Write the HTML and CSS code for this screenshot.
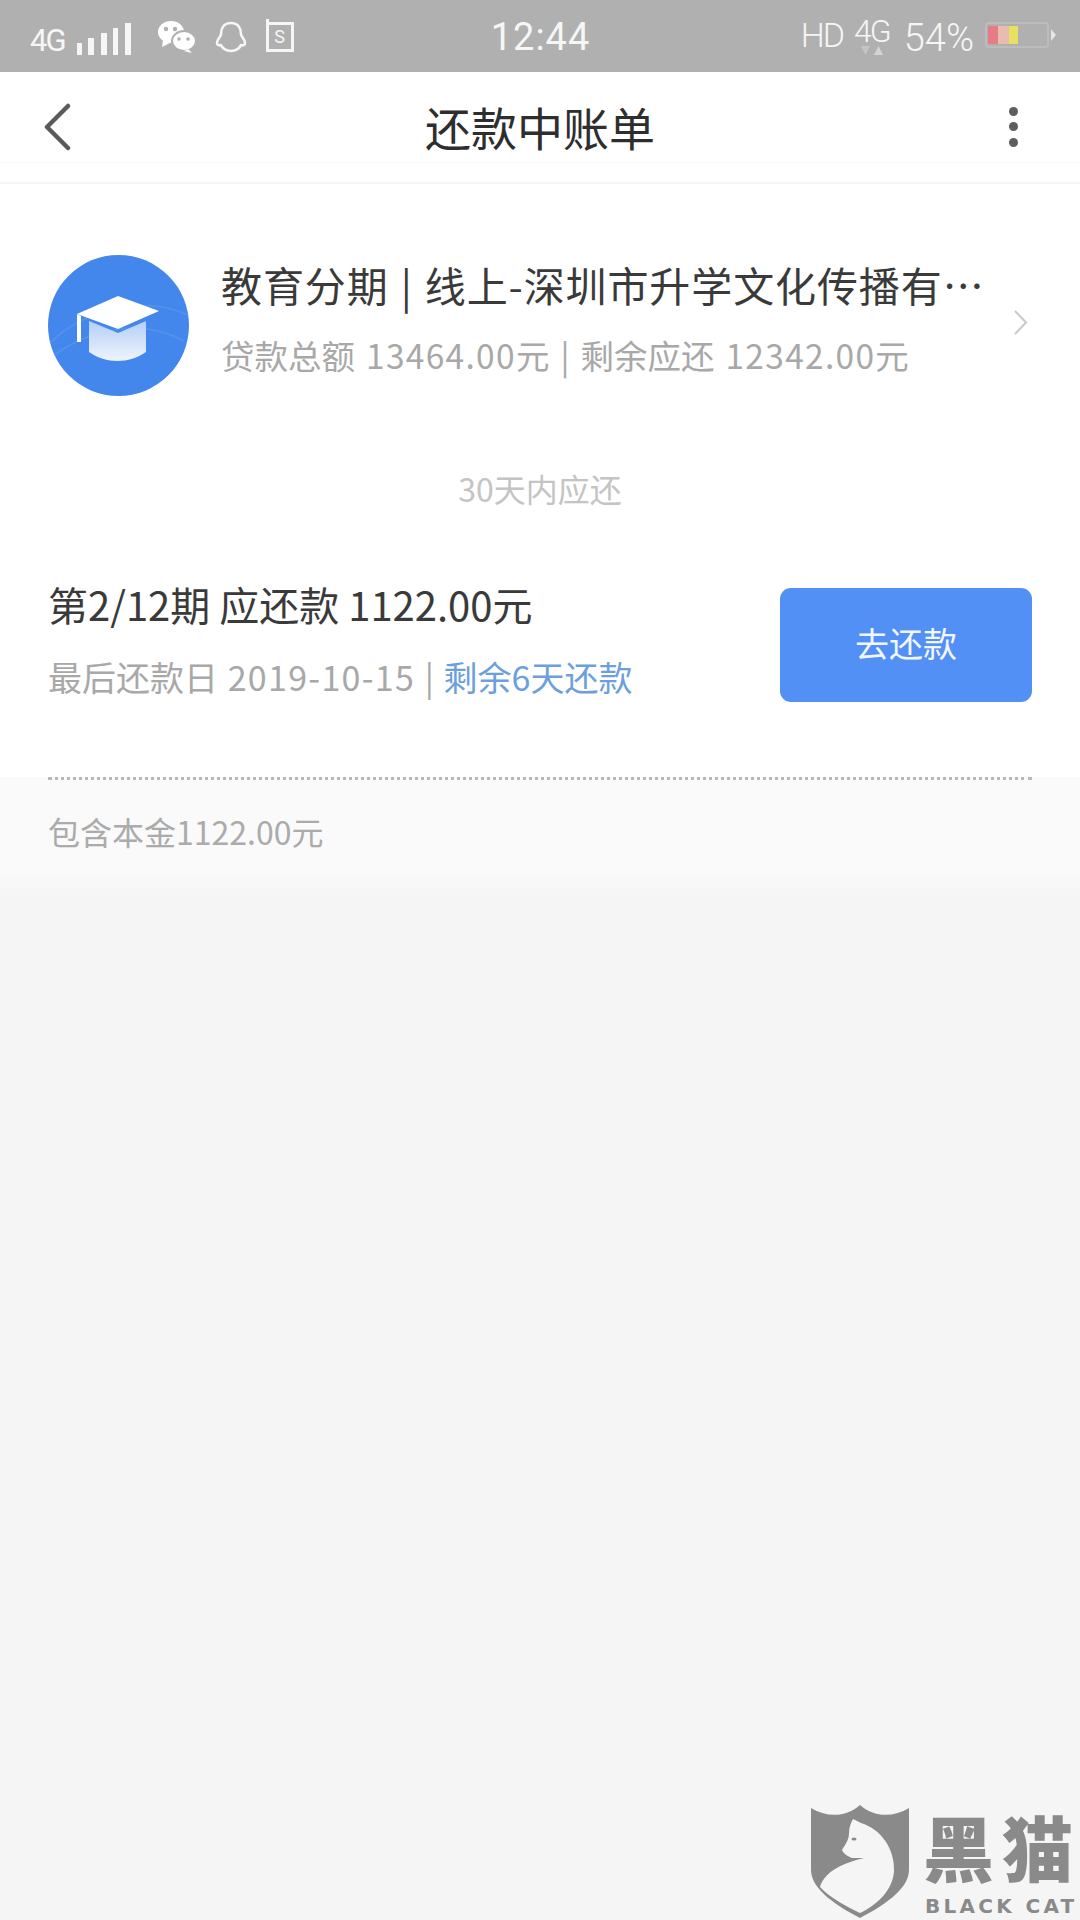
FILE: index.html
```html
<!DOCTYPE html>
<html lang="zh-CN">
<head>
	<meta charset="UTF-8">
	<meta name="viewport" content="width=device-width, initial-scale=1.0">
	<title>还款中账单</title>
	<link rel="stylesheet" href="styles.css">
</head>
<body>
	<div class="status">
		<div class="status-left">
			<span class="net">4G</span>
			<svg class="signal" width="54" height="32" viewBox="0 0 54 32">
				<rect x="0" y="20" width="5" height="12"/>
				<rect x="11" y="15" width="6" height="17"/>
				<rect x="24" y="10" width="6" height="22"/>
				<rect x="36" y="5" width="5" height="27"/>
				<rect x="48" y="0" width="6" height="32"/>
			</svg>
			<svg class="wechat" width="38" height="32" viewBox="0 0 38 32">
				<ellipse cx="13" cy="11" rx="13" ry="11" fill="#fff"/>
				<path d="M5 19l-1 7 8-4z" fill="#fff"/>
				<ellipse cx="26" cy="20" rx="12" ry="10" fill="#fff" stroke="#b0b0b0" stroke-width="2"/>
				<path d="M30 28l4 4-8-2z" fill="#fff"/>
				<circle cx="8" cy="8" r="2.200" fill="#b0b0b0"/>
				<circle cx="17" cy="8" r="2.200" fill="#b0b0b0"/>
				<circle cx="21" cy="18" r="1.800" fill="#b0b0b0"/>
				<circle cx="30" cy="18" r="1.800" fill="#b0b0b0"/>
			</svg>
			<svg class="qq" width="32" height="32" viewBox="0 0 32 32">
				<path d="M16 2C9 2 6 7 6 13c0 3-4 5-4 9 0 2 2 3 4 2 1 3 5 6 10 6s9-3 10-6c2 1 4 0 4-2 0-4-4-6-4-9 0-6-3-11-10-11z" fill="none" stroke="#f6f6f6" stroke-width="2.600" stroke-linejoin="round"/>
			</svg>
			<div class="note">
				<span class="note-s">S</span>
			</div>
		</div>
		<div class="clock">12:44</div>
		<div class="status-right">
			<span class="hd">HD</span>
			<div class="net-up">
				<span class="net-small">4G</span>
				<svg width="22" height="11" viewBox="0 0 22 11">
					<path d="M0 1h9l-4.500 9z" fill="#c4c4c4"/>
					<path d="M13 10h9l-4.500-9z" fill="#d4d4d4"/>
				</svg>
			</div>
			<span class="percent">54%</span>
			<div class="battery">
				<div class="battery-body">
					<i class="cell cell-red"></i>
					<i class="cell cell-pink"></i>
					<i class="cell cell-yellow"></i>
				</div>
				<i class="battery-tip"></i>
			</div>
		</div>
	</div>

	<header class="nav">
		<svg class="back" width="28" height="48" viewBox="0 0 28 48">
			<path d="M25 3L4 24l21 21" fill="none" stroke="#5a5a5a" stroke-width="4.500" stroke-linecap="round" stroke-linejoin="round"/>
		</svg>
		<h1 class="nav-title">还款中账单</h1>
		<div class="more"><i></i><i></i><i></i></div>
	</header>
	<div class="nav-gap"></div>

	<section class="loan">
		<svg class="loan-icon" width="141" height="141" viewBox="0 0 141 141">
			<defs>
				<linearGradient id="capBody" x1="0" y1="0" x2="0" y2="1">
					<stop offset="0" stop-color="#b4cff6"/>
					<stop offset="1" stop-color="#eef4fd"/>
				</linearGradient>
			</defs>
			<circle cx="70.500" cy="70.500" r="70.500" fill="#4487ec"/>
			<path d="M2 88c30-30 90-50 138-28M6 100c40-28 90-36 130-14" fill="none" stroke="#5f99ef" stroke-width="2" opacity="0.5"/>
			<path d="M41 66l29 12 28-12v31c-17 12-40 12-57 0z" fill="url(#capBody)"/>
			<path d="M70 41l41 15-41 18-41-15z" fill="#fff"/>
			<path d="M29 59v28h4V61z" fill="#fff"/>
		</svg>
		<div class="loan-text">
			<div class="loan-title">教育分期 | 线上-深圳市升学文化传播有…</div>
			<div class="loan-sub">贷款总额 <span class="amount">13464.00</span>元 | 剩余应还 <span class="amount">12342.00</span>元</div>
		</div>
		<svg class="loan-arrow" width="15" height="27" viewBox="0 0 15 27">
			<path d="M2 2l11 11.500L2 25" fill="none" stroke="#c9c9c9" stroke-width="2"/>
		</svg>
	</section>

	<div class="due-label">30天内应还</div>

	<section class="bill">
		<div class="bill-text">
			<div class="bill-title">第2/12期 应还款 1122.00元</div>
			<div class="bill-sub">最后还款日 <span class="bill-date">2019-10-15</span> | <span class="bill-left">剩余6天还款</span></div>
		</div>
		<button class="pay">去还款</button>
	</section>

	<section class="detail">
		<p class="detail-text">包含本金1122.00元</p>
	</section>

	<div class="mark">
		<svg class="mark-shield" width="98" height="114" viewBox="0 0 98 114">
			<path d="M0 3c16 10 36 9 49-3 13 12 33 13 49 3v62c0 20-28 37-49 48C28 102 0 85 0 65z" fill="#8a8a8a"/>
			<path d="M42 14l8 4c20 6 34 26 33 48-1 19-17 34-34 42-13-6-31-16-40-26 5-16 23-24 44-29H41c-5-2-9-5-10-8 3-5 7-10 7-17 0-6 2-10 4-14z" fill="#f5f5f5"/>
			<ellipse cx="43" cy="34" rx="2.500" ry="1.500" fill="#8a8a8a"/>
		</svg>
		<div class="mark-text">
			<div class="mark-cn">黑猫</div>
			<div class="mark-en">BLACK CAT</div>
		</div>
	</div>
</body>
</html>
```

FILE: styles.css
```css
* {
	box-sizing: border-box;
}
html, body {
	margin: 0;
	padding: 0;
}
body {
	position: relative;
	width: 1080px;
	height: 1920px;
	overflow: hidden;
	font-family: "Noto Sans CJK SC", "Noto Sans", sans-serif;
	background-color: #f5f5f5;
	color: #333;
}

/* status bar */
.status {
	display: flex;
	align-items: center;
	justify-content: space-between;
	height: 72px;
	padding: 0 24px 0 30px;
	background-color: #b0b0b0;
	color: #f6f6f6;
	font-family: Roboto, "Noto Sans", sans-serif;
}
.status-left,
.status-right {
	display: flex;
	align-items: center;
	width: 320px;
}
.status-right {
	justify-content: flex-end;
}
.net {
	margin-top: 9px;
	font-size: 31px;
	letter-spacing: -2px;
}
.signal {
	margin: 6px 0 0 12px;
	fill: #f6f6f6;
}
.wechat {
	margin: 1px 0 0 27px;
}
.qq {
	margin: 1px 0 0 19px;
}
.note {
	position: relative;
	display: flex;
	align-items: center;
	justify-content: center;
	width: 28px;
	height: 30px;
	margin: 2px 0 0 19px;
	border: 3px solid #f6f6f6;
}
.note::before {
	content: "";
	position: absolute;
	left: -3px;
	top: -6px;
	width: 3px;
	height: 5px;
	background-color: #f6f6f6;
}
.note-s {
	font-size: 18px;
	line-height: 1;
}
.clock {
	font-size: 38px;
	letter-spacing: 1px;
	margin: 1px 0 0 -5px;
}
.hd {
	font-size: 34px;
	font-weight: 300;
	letter-spacing: -2px;
	margin-top: -2px;
}
.net-up {
	display: flex;
	flex-direction: column;
	align-items: center;
	margin: 2px 0 0 11px;
}
.net-small {
	font-size: 32px;
	font-weight: 300;
	line-height: 27px;
	letter-spacing: -2px;
}
.percent {
	font-size: 38px;
	font-weight: 300;
	margin: 3px 0 0 14px;
}
.battery {
	display: flex;
	align-items: center;
	margin: -2px 0 0 11px;
}
.battery-body {
	display: flex;
	width: 64px;
	height: 26px;
	padding: 2px 1px;
	border: 2px solid #bcbcbc;
	border-radius: 4px;
}
.cell {
	display: block;
	height: 100%;
}
.cell-red {
	width: 10px;
	background-color: #e67c86;
}
.cell-pink {
	width: 11px;
	background-color: #e8bcb0;
}
.cell-yellow {
	width: 9px;
	background-color: #e8e060;
}
.battery-tip {
	width: 5px;
	height: 12px;
	margin-left: 2px;
	background-color: #e6e6e6;
	clip-path: polygon(0 0, 100% 50%, 0 100%);
}

/* nav */
.nav {
	display: flex;
	align-items: center;
	justify-content: space-between;
	height: 91px;
	padding: 19px 62px 0 43px;
	background-color: #fff;
	border-bottom: 1px solid #f9f9f9;
}
.nav-title {
	margin: 0 0 2px;
	font-size: 46px;
	font-weight: 400;
	color: #2e2e2e;
}
.more {
	display: flex;
	flex-direction: column;
	gap: 6.500px;
}
.more i {
	display: block;
	width: 9px;
	height: 9px;
	border-radius: 50%;
	background-color: #5e5e5e;
}
.nav-gap {
	height: 21px;
	background-color: #fff;
	border-bottom: 2px solid #f6f6f6;
}

/* loan card */
.loan {
	display: flex;
	align-items: center;
	padding: 71px 52px 0 48px;
	background-color: #fff;
}
.loan-icon {
	flex: none;
}
.loan-text {
	flex: 1;
	margin: 0 0 16px 32px;
	min-width: 0;
}
.loan-title {
	font-size: 41px;
	line-height: 56px;
	word-spacing: 2px;
	letter-spacing: 0.900px;
	color: #3a3a3a;
	white-space: nowrap;
}
.loan-sub {
	margin-top: 19px;
	font-size: 33.500px;
	line-height: 48px;
	word-spacing: 3.500px;
	color: #a8a8a8;
	white-space: nowrap;
}
.amount {
	letter-spacing: 1.300px;
}
.loan-arrow {
	flex: none;
	margin-bottom: 6px;
}

.due-label {
	padding-top: 68px;
	height: 191px;
	background-color: #fff;
	font-size: 32px;
	line-height: 48px;
	text-align: center;
	color: #c4c4c4;
}

/* bill */
.bill {
	display: flex;
	align-items: center;
	justify-content: space-between;
	height: 190px;
	padding: 0 48px 74px;
	background-color: #fff;
}
.bill-text {
	margin-bottom: 14px;
}
.bill-title {
	font-size: 40px;
	line-height: 56px;
	color: #3a3a3a;
}
.bill-sub {
	margin-top: 21px;
	font-size: 34px;
	line-height: 48px;
	word-spacing: 2px;
	color: #a8a8a8;
}
.bill-date {
	letter-spacing: 1.300px;
}
.bill-left {
	color: #6c9fdc;
}
.pay {
	width: 252px;
	height: 114px;
	padding: 0 0 6px;
	border: 0;
	border-radius: 11px;
	background-color: #5290f5;
	color: #f2f6fd;
	font-family: inherit;
	font-size: 34px;
}

/* detail */
.detail {
	height: 122px;
	padding: 0 48px;
	background: linear-gradient(#fafafa, #fafafa 75%, #f5f5f5);
}
.detail-text {
	margin: 0;
	padding-top: 28px;
	border-top: 3px dotted #b8b8b8;
	font-size: 32px;
	line-height: 46px;
	color: #ababab;
}

/* watermark */
.mark {
	position: absolute;
	left: 811px;
	top: 1805px;
	display: flex;
	gap: 14px;
}
.mark-text {
	padding-top: 5px;
	color: #8a8a8a;
}
.mark-cn {
	font-size: 71px;
	line-height: 70px;
	font-weight: 900;
	letter-spacing: 8px;
	white-space: nowrap;
}
.mark-en {
	margin: 14px 0 0 2px;
	font-family: "DejaVu Sans", sans-serif;
	font-size: 20px;
	line-height: 24px;
	font-weight: 700;
	letter-spacing: 3.300px;
	white-space: nowrap;
}
```
